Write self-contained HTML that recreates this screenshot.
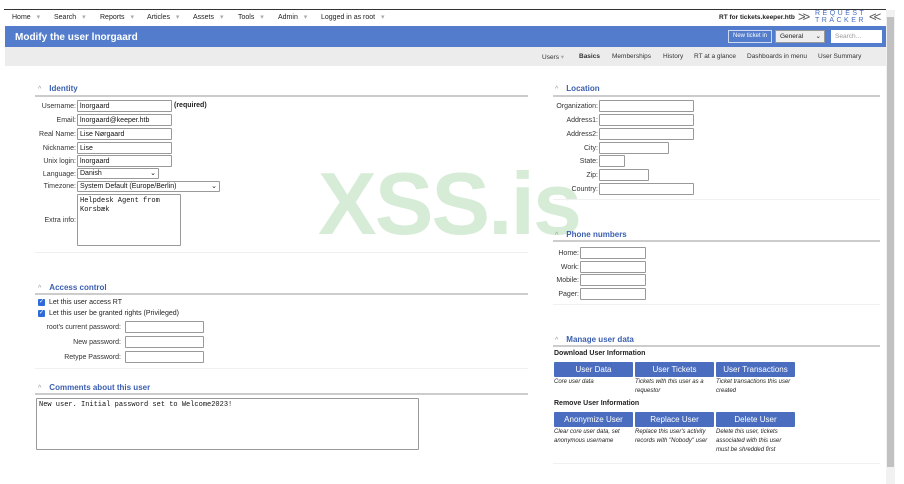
<!DOCTYPE html>
<html><head><meta charset="utf-8"><style>
*{box-sizing:border-box;margin:0;padding:0}
body{width:904px;height:484px;overflow:hidden;background:#fff;font-family:"Liberation Sans",sans-serif;font-size:7px;color:#222;position:relative}
.a{position:absolute}
.in{position:absolute;border:1px solid #999;border-radius:1px;background:#fff;height:12px;font-size:7px;padding:1px 2px;line-height:9px;color:#111}
.lb{position:absolute;text-align:right;font-size:7px;line-height:13px;color:#333}
.h{position:absolute;font-size:8px;font-weight:bold;color:#3b5fb0}
.h:before{content:"^";color:#999;font-weight:normal;margin-right:8px;font-size:7px}
.ln{position:absolute;height:2px;background:#ccc}
.dv{position:absolute;height:1px;background:#f0f0f0}
.btn{position:absolute;background:#4a6dbf;color:#fff;font-size:8px;text-align:center;line-height:15px;height:15px;border-radius:1px}
.ds{position:absolute;font-size:6px;font-style:italic;line-height:9px;color:#222}
.m{position:absolute;top:13px;font-size:7px;color:#222}
.m span{color:#aaa;margin-left:4px}
.sn{position:absolute;top:53px;font-size:6.5px;color:#333}
.cb{position:absolute;width:7px;height:7px;background:#2f6bd8;border-radius:1px;color:#fff;font-size:6px;line-height:7px;text-align:center}
</style></head><body>
<div class="a" style="left:4px;top:9px;width:882px;height:1px;background:#333"></div>
<div class="m" style="left:12px">Home <span>▾</span></div>
<div class="m" style="left:54px">Search <span>▾</span></div>
<div class="m" style="left:100px">Reports <span>▾</span></div>
<div class="m" style="left:147px">Articles <span>▾</span></div>
<div class="m" style="left:193px">Assets <span>▾</span></div>
<div class="m" style="left:238px">Tools <span>▾</span></div>
<div class="m" style="left:278px">Admin <span>▾</span></div>
<div class="m" style="left:321px">Logged in as root <span>▾</span></div>
<div class="a" style="left:719px;top:14px;font-size:6.5px;font-weight:bold">RT for tickets.keeper.htb</div>
<div class="a" style="left:798px;top:9px;font-size:13px;color:#555;letter-spacing:-3px">&gt;&gt;</div>
<div class="a" style="left:815px;top:10px;font-size:7px;color:#4a6dbf;letter-spacing:2.5px;line-height:7px">REQUEST<br>TRACKER</div>
<div class="a" style="left:869px;top:9px;font-size:13px;color:#555;letter-spacing:-3px">&lt;&lt;</div>
<div class="a" style="left:5px;top:26px;width:881px;height:21px;background:#537dcc"></div>
<div class="a" style="left:15px;top:32px;font-size:10px;font-weight:bold;color:#fff">Modify the user lnorgaard</div>
<div class="a" style="left:728px;top:30px;width:44px;height:13px;border:1px solid #cfd9ef;color:#fff;font-size:6px;line-height:11px;text-align:center">New ticket in</div>
<div class="a" style="left:775px;top:30px;width:50px;height:13px;background:#eee;border:1px solid #999;font-size:6.5px;line-height:11px;padding-left:4px">General <span style="float:right;margin-right:3px">⌄</span></div>
<div class="a" style="left:831px;top:30px;width:51px;height:13px;background:#fff;font-size:6.5px;line-height:13px;padding-left:4px;color:#999">Search...</div>
<div class="a" style="left:5px;top:47px;width:881px;height:19px;background:#ececec"></div>
<div class="sn" style="left:542px">Users <span style="color:#aaa">▾</span></div>
<div class="sn" style="left:579px;font-weight:bold">Basics</div>
<div class="sn" style="left:612px">Memberships</div>
<div class="sn" style="left:663px">History</div>
<div class="sn" style="left:694px">RT at a glance</div>
<div class="sn" style="left:747px">Dashboards in menu</div>
<div class="sn" style="left:818px">User Summary</div>
<div class="a" style="left:886px;top:10px;width:9px;height:474px;background:#f1f1f1"></div>
<div class="a" style="left:887px;top:17px;width:7px;height:450px;background:#c1c1c1"></div>

<div class="a" style="left:318px;top:153px;font-size:88px;font-weight:bold;color:#d6ecd6;letter-spacing:-2px">XSS.is</div>

<div class="h" style="left:38px;top:84px">Identity</div>
<div class="ln" style="left:35px;top:95px;width:493px"></div>
<div class="lb" style="left:0;width:76px;top:100px">Username:</div><div class="in" style="left:77px;top:100px;width:95px">lnorgaard</div>
<div class="a" style="left:174px;top:102px;font-weight:bold">(required)</div>
<div class="lb" style="left:0;width:76px;top:114px">Email:</div><div class="in" style="left:77px;top:114px;width:95px">lnorgaard@keeper.htb</div>
<div class="lb" style="left:0;width:76px;top:128px">Real Name:</div><div class="in" style="left:77px;top:128px;width:95px">Lise Nørgaard</div>
<div class="lb" style="left:0;width:76px;top:142px">Nickname:</div><div class="in" style="left:77px;top:142px;width:95px">Lise</div>
<div class="lb" style="left:0;width:76px;top:155px">Unix login:</div><div class="in" style="left:77px;top:155px;width:95px">lnorgaard</div>
<div class="lb" style="left:0;width:76px;top:168px">Language:</div><div class="in" style="left:77px;top:168px;width:82px;height:11px;line-height:8px">Danish<span style="float:right">⌄</span></div>
<div class="lb" style="left:0;width:76px;top:180px">Timezone:</div><div class="in" style="left:77px;top:181px;width:143px;height:11px;line-height:8px">System Default (Europe/Berlin)<span style="float:right">⌄</span></div>
<div class="lb" style="left:0;width:76px;top:214px">Extra info:</div>
<div class="in" style="left:77px;top:194px;width:104px;height:52px;font-family:'Liberation Mono',monospace;font-size:7px;line-height:9px;padding-top:2px">Helpdesk Agent from<br>Korsbæk</div>
<div class="dv" style="left:35px;top:252px;width:493px"></div>

<div class="h" style="left:38px;top:283px">Access control</div>
<div class="ln" style="left:35px;top:293px;width:493px"></div>
<div class="cb" style="left:38px;top:299px">✓</div>
<div class="a" style="left:49px;top:299px">Let this user access RT</div>
<div class="cb" style="left:38px;top:310px">✓</div>
<div class="a" style="left:49px;top:310px">Let this user be granted rights (Privileged)</div>
<div class="lb" style="left:0;width:121px;top:321px">root's current password:</div><div class="in" style="left:125px;top:321px;width:79px"></div>
<div class="lb" style="left:0;width:121px;top:336px">New password:</div><div class="in" style="left:125px;top:336px;width:79px"></div>
<div class="lb" style="left:0;width:121px;top:351px">Retype Password:</div><div class="in" style="left:125px;top:351px;width:79px"></div>
<div class="dv" style="left:35px;top:368px;width:493px"></div>

<div class="h" style="left:38px;top:383px">Comments about this user</div>
<div class="ln" style="left:35px;top:393px;width:493px"></div>
<div class="in" style="left:36px;top:398px;width:383px;height:52px;font-family:'Liberation Mono',monospace;font-size:7px;line-height:9px;padding-top:2px">New user. Initial password set to Welcome2023!</div>

<div class="h" style="left:555px;top:84px">Location</div>
<div class="ln" style="left:553px;top:95px;width:327px"></div>
<div class="lb" style="left:540px;width:58px;top:100px">Organization:</div><div class="in" style="left:599px;top:100px;width:95px"></div>
<div class="lb" style="left:540px;width:58px;top:114px">Address1:</div><div class="in" style="left:599px;top:114px;width:95px"></div>
<div class="lb" style="left:540px;width:58px;top:128px">Address2:</div><div class="in" style="left:599px;top:128px;width:95px"></div>
<div class="lb" style="left:540px;width:58px;top:142px">City:</div><div class="in" style="left:599px;top:142px;width:70px"></div>
<div class="lb" style="left:540px;width:58px;top:155px">State:</div><div class="in" style="left:599px;top:155px;width:26px"></div>
<div class="lb" style="left:540px;width:58px;top:169px">Zip:</div><div class="in" style="left:599px;top:169px;width:50px"></div>
<div class="lb" style="left:540px;width:58px;top:183px">Country:</div><div class="in" style="left:599px;top:183px;width:95px"></div>
<div class="dv" style="left:553px;top:199px;width:327px"></div>

<div class="h" style="left:555px;top:230px">Phone numbers</div>
<div class="ln" style="left:553px;top:240px;width:327px"></div>
<div class="lb" style="left:540px;width:39px;top:247px">Home:</div><div class="in" style="left:580px;top:247px;width:66px"></div>
<div class="lb" style="left:540px;width:39px;top:261px">Work:</div><div class="in" style="left:580px;top:261px;width:66px"></div>
<div class="lb" style="left:540px;width:39px;top:274px">Mobile:</div><div class="in" style="left:580px;top:274px;width:66px"></div>
<div class="lb" style="left:540px;width:39px;top:288px">Pager:</div><div class="in" style="left:580px;top:288px;width:66px"></div>
<div class="dv" style="left:553px;top:304px;width:327px"></div>

<div class="h" style="left:555px;top:335px">Manage user data</div>
<div class="ln" style="left:553px;top:345px;width:327px"></div>
<div class="a" style="left:554px;top:350px;font-weight:bold">Download User Information</div>
<div class="btn" style="left:554px;top:362px;width:79px">User Data</div>
<div class="btn" style="left:635px;top:362px;width:79px">User Tickets</div>
<div class="btn" style="left:716px;top:362px;width:79px">User Transactions</div>
<div class="ds" style="left:554px;top:378px;width:78px">Core user data</div>
<div class="ds" style="left:635px;top:378px;width:78px">Tickets with this user as a requestor</div>
<div class="ds" style="left:716px;top:378px;width:78px">Ticket transactions this user created</div>
<div class="a" style="left:554px;top:400px;font-weight:bold">Remove User Information</div>
<div class="btn" style="left:554px;top:412px;width:79px">Anonymize User</div>
<div class="btn" style="left:635px;top:412px;width:79px">Replace User</div>
<div class="btn" style="left:716px;top:412px;width:79px">Delete User</div>
<div class="ds" style="left:554px;top:428px;width:80px">Clear core user data, set anonymous username</div>
<div class="ds" style="left:635px;top:428px;width:80px">Replace this user's activity records with "Nobody" user</div>
<div class="ds" style="left:716px;top:428px;width:80px">Delete this user, tickets associated with this user must be shredded first</div>
<div class="dv" style="left:553px;top:463px;width:327px"></div>
</body></html>
